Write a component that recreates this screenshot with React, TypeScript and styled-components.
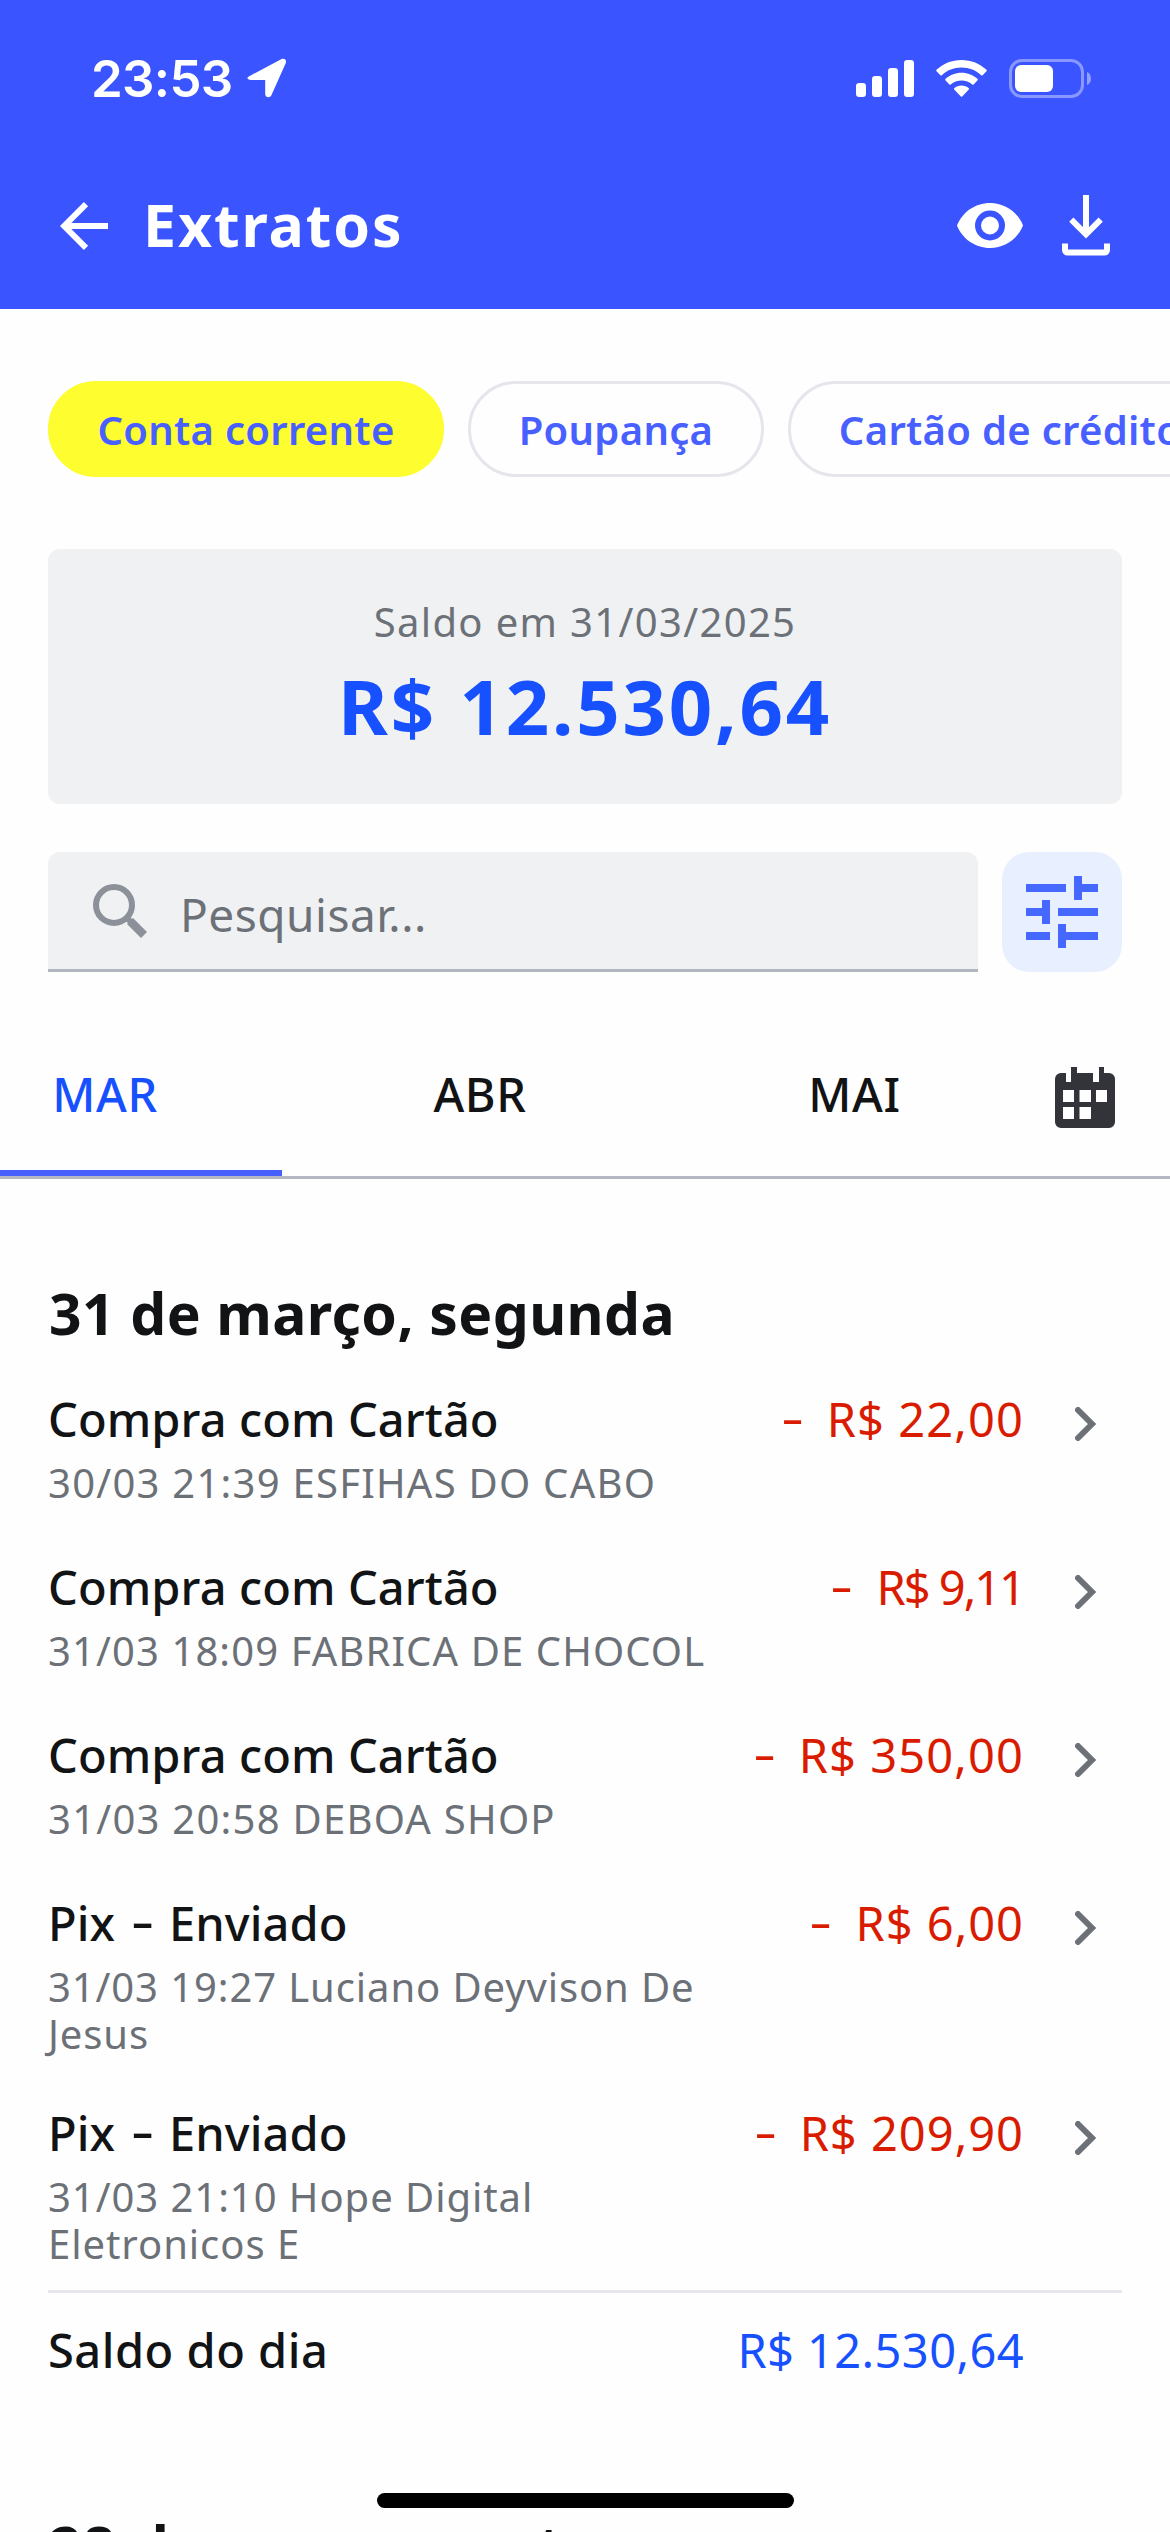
import React from "react";
import styled, { createGlobalStyle } from "styled-components";

const GlobalStyle = createGlobalStyle`
  *, *::before, *::after { box-sizing: border-box; }
  html, body { margin: 0; padding: 0; background: #fefefe; }
  body { font-family: "Noto Sans", "Open Sans", sans-serif; color: #111315; }
  button { font: inherit; background: none; border: 0; padding: 0; margin: 0; color: inherit; }
  svg { display: block; flex: none; }
`;

const Screen = styled.div`
  position: relative;
  width: 1170px;
  height: 2532px;
  overflow: hidden;
  background: #fefefe;
`;

const Header = styled.header`
  height: 309px;
  background: #3a54ff;
  color: #fff;
`;

const StatusBar = styled.div`
  display: flex;
  align-items: center;
  justify-content: space-between;
  height: 142px;
  padding: 14px 78px 0 91px;
`;

const Clock = styled.div`
  display: flex;
  align-items: center;
  gap: 14px;
  font-family: Inter, sans-serif;
  font-size: 51px;
  font-weight: 600;
  letter-spacing: -0.7px;
`;

const StatusIcons = styled.div`
  display: flex;
  align-items: center;
  gap: 22px;
`;

const AppBar = styled.div`
  display: flex;
  align-items: center;
  height: 167px;
  padding: 0 60px;
`;

const BackButton = styled.button`
  width: 48px;
  margin-right: 35px;
`;

const Title = styled.h1`
  flex: 1;
  margin: 0;
  padding: 0 0 3px;
  font-size: 59px;
  font-weight: 700;
  letter-spacing: 1.9px;
`;

const HeaderActions = styled.div`
  display: flex;
  align-items: center;
  gap: 39px;
`;

const Chips = styled.nav`
  display: flex;
  gap: 24px;
  padding: 72px 0 72px 48px;
  overflow: hidden;
`;

const Chip = styled.button<{ $active?: boolean; $width: number }>`
  flex: none;
  width: ${(p) => p.$width}px;
  height: 96px;
  border-radius: 48px;
  border: 3px solid ${(p) => (p.$active ? "#fdfd30" : "#e4e6eb")};
  background: ${(p) => (p.$active ? "#fdfd30" : "transparent")};
  color: #4760ff;
  font-size: 40px;
  font-weight: 600;
  letter-spacing: 0.3px;
  white-space: nowrap;
`;

const BalanceCard = styled.section`
  height: 255px;
  margin: 0 48px;
  padding-top: 43px;
  border-radius: 12px;
  background: #f0f1f3;
  text-align: center;
`;

const BalanceLabel = styled.div`
  font-size: 40px;
  line-height: 60px;
  letter-spacing: 1.35px;
  color: #6c7178;
`;

const BalanceValue = styled.div`
  font-size: 76px;
  line-height: 107px;
  font-weight: 700;
  letter-spacing: 2.8px;
  color: #1751ff;
`;

const SearchRow = styled.div`
  display: flex;
  gap: 24px;
  height: 120px;
  margin: 48px 48px 0;
`;

const SearchField = styled.div`
  flex: 1;
  display: flex;
  align-items: center;
  gap: 30px;
  padding-left: 44px;
  border-radius: 12px 12px 0 0;
  border-bottom: 3px solid #b1b7bf;
  background: #f0f1f3;
`;

const Placeholder = styled.span`
  padding-top: 7px;
  font-size: 46px;
  letter-spacing: 0.5px;
  color: #6c7178;
`;

const FilterButton = styled.button`
  display: grid;
  place-items: center;
  width: 120px;
  height: 120px;
  border-radius: 27px;
  background: #e8f0ff;
`;

const Tabs = styled.div`
  display: flex;
  height: 161px;
  margin-top: 46px;
  border-bottom: 3px solid #b3b7c1;
`;

const Tab = styled.button<{ $active?: boolean; $width: number }>`
  width: ${(p) => p.$width}px;
  text-align: center;
  font-size: 47px;
  font-weight: 500;
  letter-spacing: 0.6px;
  color: ${(p) => (p.$active ? "#1751ff" : "#111315")};
  border-bottom: 6px solid ${(p) => (p.$active ? "#475fff" : "transparent")};
  padding-right: ${(p) => (p.$active ? 72 : 0)}px;
`;

const CalendarButton = styled.button`
  display: flex;
  align-items: center;
  margin-left: 24px;
`;

const DayHeading = styled.h2<{ $top: number; $tracking: number }>`
  margin: ${(p) => p.$top}px 48px 0 49px;
  font-size: 57px;
  line-height: 80px;
  font-weight: 700;
  letter-spacing: ${(p) => p.$tracking}px;
  white-space: nowrap;
`;

const List = styled.ul`
  list-style: none;
  margin: 36px 48px 0;
  padding: 0;
  border-bottom: 3px solid #e6e7eb;
`;

const Item = styled.li`
  display: flex;
  min-height: 168px;
  padding-bottom: 46px;
  &:last-child { padding-bottom: 23px; }
`;

const ItemText = styled.div`
  flex: 1;
`;

const ItemTitle = styled.div<{ $tracking?: number }>`
  font-size: 47px;
  line-height: 60px;
  font-weight: 500;
  letter-spacing: ${(p) => p.$tracking ?? 0.1}px;
`;

const Dash = styled.span<{ $inline?: boolean }>`
  display: inline-block;
  margin: 0 ${(p) => (p.$inline ? 7 : 0)}px;
  letter-spacing: 0;
  transform: translateY(-2px) scaleX(1.5);
`;

const ItemDetail = styled.div<{ $tracking: number }>`
  margin-top: 10px;
  font-size: 40px;
  line-height: 47px;
  letter-spacing: ${(p) => p.$tracking}px;
  color: #6c7178;
  white-space: pre-line;
`;

const Amount = styled.div<{ $tone: "debit" | "balance"; $tracking: number }>`
  display: flex;
  gap: 27px;
  font-size: 47px;
  line-height: 60px;
  letter-spacing: ${(p) => p.$tracking}px;
  white-space: nowrap;
  color: ${(p) => (p.$tone === "debit" ? "#d91c00" : "#1751ff")};
`;

const Chevron = styled.div`
  width: 98px;
  padding: 18px 0 0 51px;
`;

const DayBalance = styled.div`
  display: flex;
  justify-content: space-between;
  margin: 27px 146px 0 48px;
`;

const HomeIndicator = styled.div`
  position: absolute;
  left: 377px;
  top: 2493px;
  width: 417px;
  height: 15px;
  border-radius: 8px;
  background: #000;
`;

const chips = [
  { label: "Conta corrente", width: 396, active: true },
  { label: "Poupança", width: 296 },
  { label: "Cartão de crédito", width: 444 },
];

const tabs = [
  { label: "MAR", width: 282, active: true },
  { label: "ABR", width: 396 },
  { label: "MAI", width: 353 },
];

const items = [
  { title: ["Compra com Cartão"], detail: "30/03 21:39 ESFIHAS DO CABO", tracking: 1.25, amount: "R$ 22,00", amountTracking: 1.1 },
  { title: ["Compra com Cartão"], detail: "31/03 18:09 FABRICA DE CHOCOL", tracking: 1.1, amount: "R$ 9,11", amountTracking: -2 },
  { title: ["Compra com Cartão"], detail: "31/03 20:58 DEBOA SHOP", tracking: 1.25, amount: "R$ 350,00", amountTracking: 1.1 },
  { title: ["Pix", "Enviado"], detail: "31/03 19:27 Luciano Deyvison De\nJesus", tracking: 0.9, amount: "R$ 6,00", amountTracking: 1 },
  { title: ["Pix", "Enviado"], detail: "31/03 21:10 Hope Digital\nEletronicos E", tracking: 0.95, amount: "R$ 209,90", amountTracking: 1 },
];

const LocationIcon = () => (
  <svg width="40" height="40" viewBox="0 0 40 40" fill="#fff">
    <path d="M2.200 18.200 34.600 1.100c2.900-1.300 5.300.8 4.200 3.900L24.500 37c-1.300 3.200-6.100 2.800-6.300-.8V22H4C.2 21.900-.8 19.600 2.200 18.200z" />
  </svg>
);

const SignalIcon = () => (
  <svg width="58" height="39" viewBox="0 0 58 39" fill="#fff">
    <rect x="0" y="24" width="10" height="14" rx="3.300" />
    <rect x="16" y="17" width="10" height="21" rx="3.300" />
    <rect x="32" y="9" width="10" height="29" rx="3.300" />
    <rect x="48" y="1" width="10" height="37" rx="3.300" />
  </svg>
);

const WifiIcon = () => (
  <svg width="51" height="39" viewBox="0 0 51 39" fill="#fff">
    <path d="M25.500 1C35.200 1 44 4.700 50.500 10.800c.4.400.4 1 0 1.400l-3.900 4c-.4.400-1 .4-1.400 0C40 11.300 33.200 8.500 25.500 8.500S11 11.300 5.800 16.200c-.4.400-1 .4-1.400 0l-3.900-4c-.4-.4-.4-1 0-1.400C7 4.700 15.800 1 25.500 1z" />
    <path d="M25.500 13.700c6.200 0 11.800 2.400 16.100 6.200.4.400.4 1 0 1.400l-4 4.100c-.4.300-.9.300-1.300 0-2.900-2.500-6.700-4-10.800-4s-7.900 1.500-10.800 4c-.4.300-.9.300-1.300 0l-4-4.100c-.4-.4-.4-1 0-1.400 4.300-3.800 9.900-6.200 16.100-6.200z" />
    <path d="M25.500 26.500c2.800 0 5.300 1 7.300 2.700.4.300.4.900 0 1.300l-6.600 6.900c-.4.400-1 .4-1.400 0l-6.600-6.900c-.4-.4-.4-1 0-1.300 2-1.700 4.500-2.700 7.300-2.700z" />
  </svg>
);

const BatteryIcon = () => (
  <svg width="83" height="39" viewBox="0 0 83 39">
    <rect x="1.500" y="1.500" width="72" height="36" rx="11.500" fill="none" stroke="#fff" strokeOpacity="0.4" strokeWidth="3" />
    <rect x="6" y="6" width="38" height="27" rx="6" fill="#fff" />
    <path d="M78 13c5.300 2 5.300 11 0 13z" fill="#fff" fillOpacity="0.45" />
  </svg>
);

const BackIcon = () => (
  <svg width="48" height="48" viewBox="0 0 48 48" fill="none" stroke="#fff" strokeWidth="6">
    <path d="M48 24H5M26 2.200 4.200 24 26 45.800" />
  </svg>
);

const EyeIcon = () => (
  <svg width="66" height="45" viewBox="0 0 66 45">
    <path d="M33 0C18 0 5.200 9.300 0 22.500 5.200 35.700 18 45 33 45s27.800-9.300 33-22.500C60.800 9.300 48 0 33 0z" fill="#fff" />
    <circle cx="33" cy="22.500" r="12" fill="none" stroke="#3a54ff" strokeWidth="6" />
  </svg>
);

const DownloadIcon = () => (
  <svg width="48" height="61" viewBox="0 0 48 61" fill="none" stroke="#fff" strokeWidth="6">
    <path d="M24 0v39M9.300 24.700 24 39.300l14.700-14.600M3 48.500V55a2.500 2.500 0 0 0 2.500 2.500h37A2.500 2.500 0 0 0 45 55v-6.500" />
  </svg>
);

const SearchIcon = () => (
  <svg width="58" height="58" viewBox="0 0 58 58" fill="none" stroke="#8b9099">
    <circle cx="22" cy="23" r="18" strokeWidth="6" />
    <path d="M34.500 35.500 39 40" strokeWidth="6" />
    <path d="M38 39 52 53" strokeWidth="8.500" />
  </svg>
);

const TuneIcon = () => (
  <svg width="96" height="96" viewBox="0 0 24 24" fill="#4668ff">
    <path d="M3 17v2h6v-2H3zM3 5v2h10V5H3zm10 16v-2h8v-2h-8v-2h-2v6h2zM7 9v2H3v2h4v2h2V9H7zm14 4v-2H11v2h10zm-6-4h2V7h4V5h-4V3h-2v6z" />
  </svg>
);

const CalendarIcon = () => (
  <svg width="60" height="61" viewBox="0 0 60 61">
    <path
      fill="#32343a"
      fillRule="evenodd"
      d="M6 6h5v9h5V0h6v6h16v9h6V0h5v6h5a6 6 0 0 1 6 6v43a6 6 0 0 1-6 6H6a6 6 0 0 1-6-6V12a6 6 0 0 1 6-6zM8 23v12h11V23zM24.500 23v12H36V23zM41 23v12h11V23zM8 40v12h11V40zM24.500 40v12H36V40z"
    />
  </svg>
);

const ChevronIcon = () => (
  <svg width="21" height="34" viewBox="0 0 21 34" fill="none" stroke="#6c7178" strokeWidth="6" strokeLinecap="round">
    <path d="M3 3 17 17 3 31" />
  </svg>
);

export default function App() {
  return (
    <Screen>
      <GlobalStyle />
      <Header>
        <StatusBar>
          <Clock>
            23:53
            <LocationIcon />
          </Clock>
          <StatusIcons>
            <SignalIcon />
            <WifiIcon />
            <BatteryIcon />
          </StatusIcons>
        </StatusBar>
        <AppBar>
          <BackButton aria-label="Voltar">
            <BackIcon />
          </BackButton>
          <Title>Extratos</Title>
          <HeaderActions>
            <EyeIcon />
            <DownloadIcon />
          </HeaderActions>
        </AppBar>
      </Header>
      <Chips>
        {chips.map((c) => (
          <Chip key={c.label} $active={c.active} $width={c.width}>
            {c.label}
          </Chip>
        ))}
      </Chips>
      <BalanceCard>
        <BalanceLabel>Saldo em 31/03/2025</BalanceLabel>
        <BalanceValue>R$ 12.530,64</BalanceValue>
      </BalanceCard>
      <SearchRow>
        <SearchField>
          <SearchIcon />
          <Placeholder>Pesquisar...</Placeholder>
        </SearchField>
        <FilterButton aria-label="Filtros">
          <TuneIcon />
        </FilterButton>
      </SearchRow>
      <Tabs>
        {tabs.map((t) => (
          <Tab key={t.label} $active={t.active} $width={t.width}>
            {t.label}
          </Tab>
        ))}
        <CalendarButton aria-label="Calendário">
          <CalendarIcon />
        </CalendarButton>
      </Tabs>
      <DayHeading $top={94} $tracking={0.4}>31 de março, segunda</DayHeading>
      <List>
        {items.map((it) => (
          <Item key={it.detail}>
            <ItemText>
              <ItemTitle>
                {it.title[0]}
                {it.title[1] && (
                  <>
                    {" "}
                    <Dash $inline>-</Dash> {it.title[1]}
                  </>
                )}
              </ItemTitle>
              <ItemDetail $tracking={it.tracking}>{it.detail}</ItemDetail>
            </ItemText>
            <Amount $tone="debit" $tracking={it.amountTracking}>
              <Dash>-</Dash>
              <span>{it.amount}</span>
            </Amount>
            <Chevron>
              <ChevronIcon />
            </Chevron>
          </Item>
        ))}
      </List>
      <DayBalance>
        <ItemTitle $tracking={0.5}>Saldo do dia</ItemTitle>
        <Amount $tone="balance" $tracking={0.4}>R$ 12.530,64</Amount>
      </DayBalance>
      <DayHeading $top={126} $tracking={1.2}>28 de março, sexta</DayHeading>
      <HomeIndicator />
    </Screen>
  );
}
